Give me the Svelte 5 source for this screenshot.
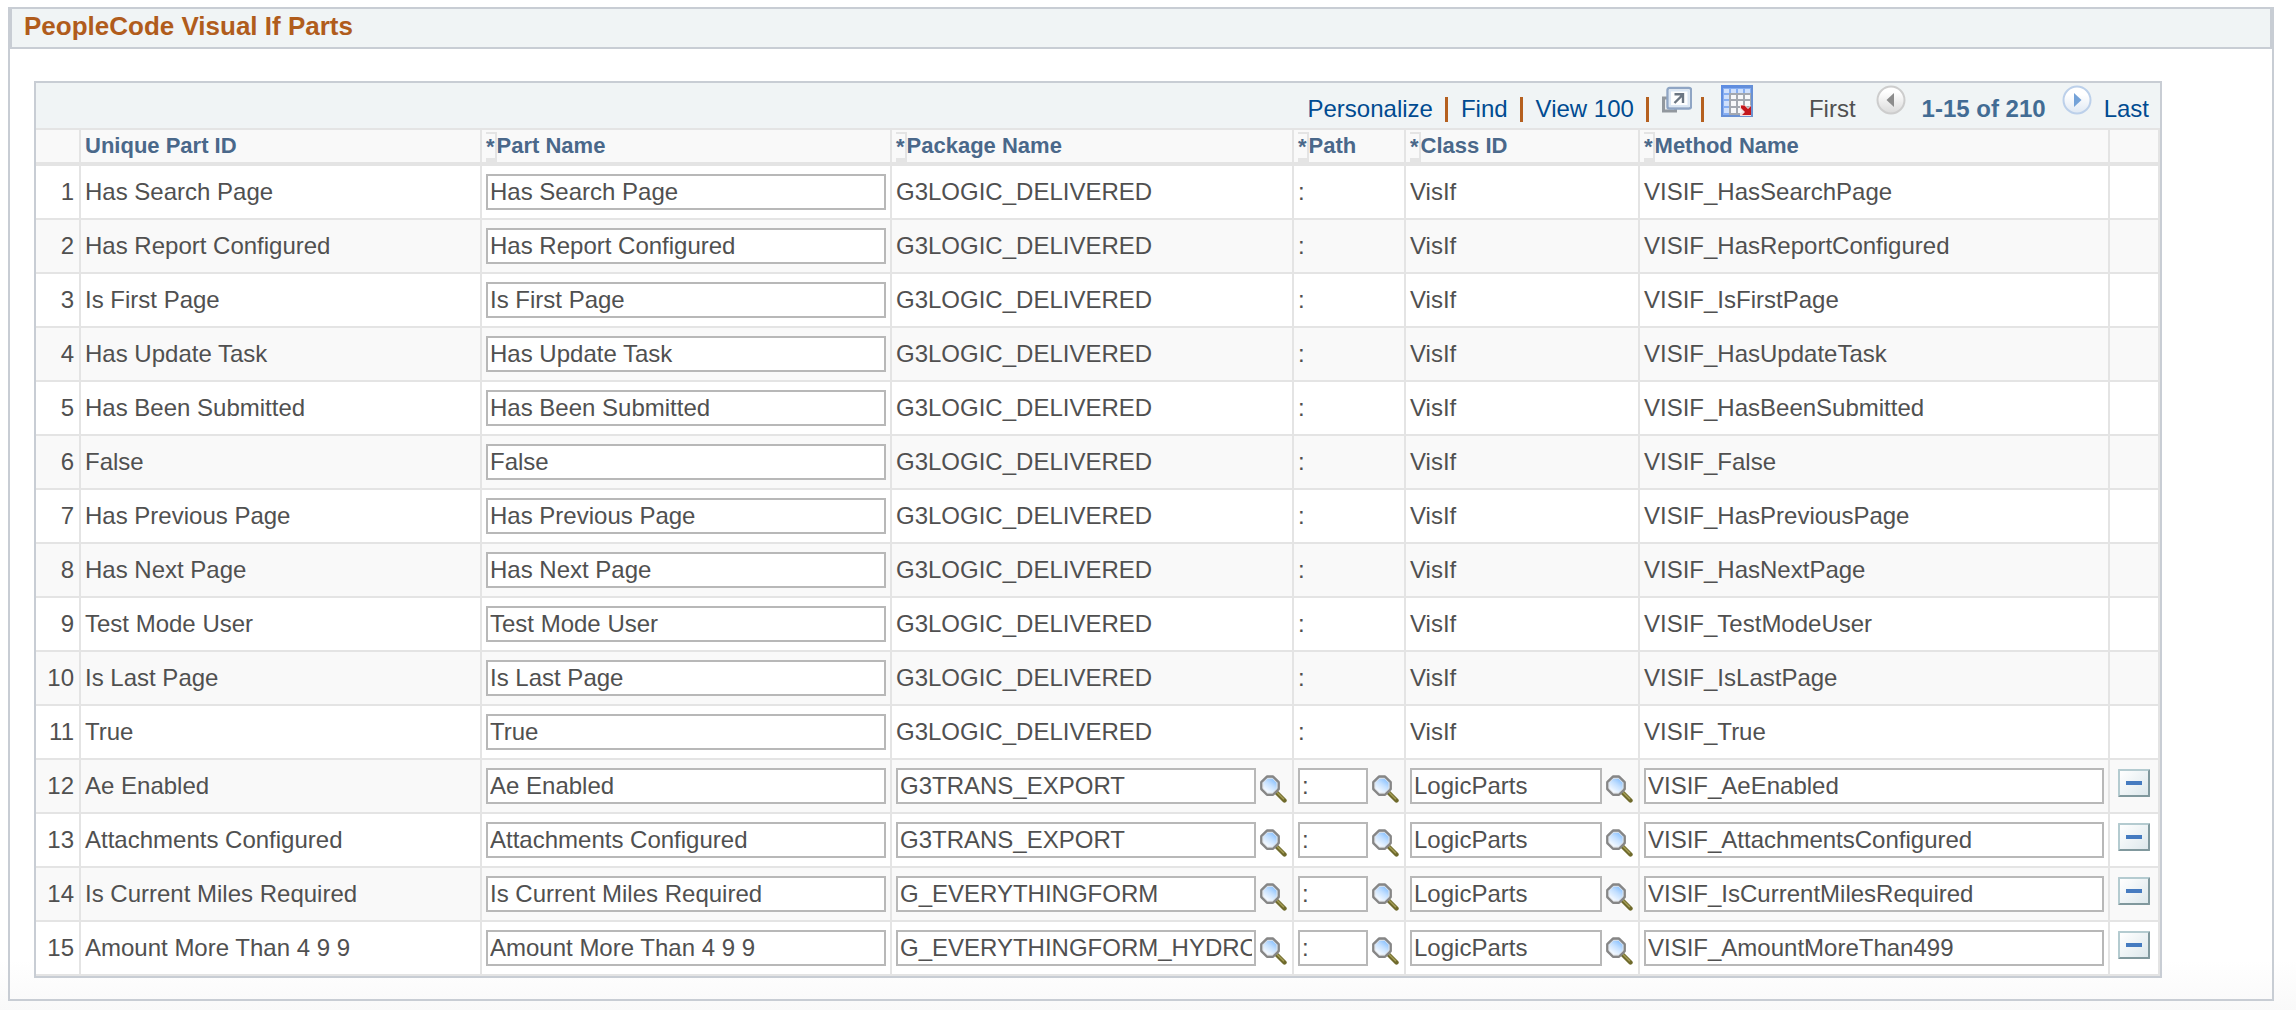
<script lang="ts">
  type Row = { name: string; pkg: string; path: string; cls: string; method: string; editable?: boolean };

  const delivered = (name: string, method: string): Row => ({
    name, pkg: 'G3LOGIC_DELIVERED', path: ':', cls: 'VisIf', method
  });
  const custom = (name: string, pkg: string, method: string): Row => ({
    name, pkg, path: ':', cls: 'LogicParts', method, editable: true
  });

  const rows: Row[] = [
    delivered('Has Search Page', 'VISIF_HasSearchPage'),
    delivered('Has Report Configured', 'VISIF_HasReportConfigured'),
    delivered('Is First Page', 'VISIF_IsFirstPage'),
    delivered('Has Update Task', 'VISIF_HasUpdateTask'),
    delivered('Has Been Submitted', 'VISIF_HasBeenSubmitted'),
    delivered('False', 'VISIF_False'),
    delivered('Has Previous Page', 'VISIF_HasPreviousPage'),
    delivered('Has Next Page', 'VISIF_HasNextPage'),
    delivered('Test Mode User', 'VISIF_TestModeUser'),
    delivered('Is Last Page', 'VISIF_IsLastPage'),
    delivered('True', 'VISIF_True'),
    custom('Ae Enabled', 'G3TRANS_EXPORT', 'VISIF_AeEnabled'),
    custom('Attachments Configured', 'G3TRANS_EXPORT', 'VISIF_AttachmentsConfigured'),
    custom('Is Current Miles Required', 'G_EVERYTHINGFORM', 'VISIF_IsCurrentMilesRequired'),
    custom('Amount More Than 4 9 9', 'G_EVERYTHINGFORM_HYDRO', 'VISIF_AmountMoreThan499')
  ];

  const required = ['Part Name', 'Package Name', 'Path', 'Class ID', 'Method Name'];
</script>

{#snippet lookup(label: string, value: string, row: number)}
  <div class="lookup">
    <input type="text" {value} aria-label="{label}, row {row}" />
    <button class="icon-btn" type="button" aria-label="Look up {label}, row {row}">
      <svg width="28" height="28" viewBox="0 0 28 28">
        <path d="M17.500 17.500L25.500 25.500" stroke="#6f6a2c" stroke-width="4.400" stroke-linecap="round" />
        <path d="M17.500 16.800L25 24.300" stroke="#a39c55" stroke-width="1.500" />
        <path d="M8 1.600h6l5.600 5.600v6.800l-5.600 5.600H8L2.400 14V7.200z" fill="url(#lens)" stroke="#868686" stroke-width="2.600" stroke-linejoin="round" />
        <path d="M8.500 3.300h5l4.500 4.500v5.800l-4.500 4.400h-5L4 13.600V7.800z" fill="none" stroke="#dfe3e8" stroke-width="1" />
      </svg>
    </button>
  </div>
{/snippet}

<svg class="defs" width="0" height="0" aria-hidden="true">
  <defs>
    <linearGradient id="lens" x1="0.8" y1="0.1" x2="0.25" y2="0.9">
      <stop offset="0" stop-color="#7fbcff" />
      <stop offset="0.45" stop-color="#c4e0ff" />
      <stop offset="1" stop-color="#ffffff" />
    </linearGradient>
    <linearGradient id="ball" x1="0" y1="0" x2="0" y2="1">
      <stop offset="0.2" stop-color="#ffffff" />
      <stop offset="1" stop-color="#dadada" />
    </linearGradient>
    <linearGradient id="ball-blue" x1="0" y1="0" x2="0" y2="1">
      <stop offset="0.3" stop-color="#ffffff" />
      <stop offset="1" stop-color="#dfe8f3" />
    </linearGradient>
    <linearGradient id="sheet" x1="0" y1="0" x2="1" y2="1">
      <stop offset="0" stop-color="#5c8ce4" />
      <stop offset="1" stop-color="#6f93cc" />
    </linearGradient>
  </defs>
</svg>

<section class="group">
  <h1>PeopleCode Visual If Parts</h1>

  <div class="grid">
    <div class="toolbar">
      <a href="#personalize">Personalize</a>
      <span class="bar"></span>
      <a href="#find">Find</a>
      <span class="bar"></span>
      <a href="#all">View 100</a>
      <span class="bar"></span>
      <button class="icon-btn" type="button" aria-label="Zoom grid">
        <svg width="30" height="28" viewBox="0 0 30 28">
          <rect x="1.500" y="13" width="12" height="13" fill="#e9ecee" stroke="#92989e" stroke-width="3" />
          <rect x="5.500" y="3" width="23.500" height="20.500" rx="2" fill="#fdfefe" stroke="#8fa5c4" stroke-width="2.400" />
          <rect x="8" y="5.500" width="18.500" height="15.500" fill="none" stroke="#dbe7f4" stroke-width="2" />
          <path d="M12.500 18L20 10.500M12.500 9.200h8.500V18" fill="none" stroke="#6b7682" stroke-width="2.400" />
        </svg>
      </button>
      <span class="bar"></span>
      <button class="icon-btn export" type="button" aria-label="Download to Excel">
        <svg width="32" height="32" viewBox="0 0 32 32">
          <rect width="32" height="32" fill="url(#sheet)" />
          <rect x="2" y="3" width="28" height="27" fill="#a3a8b0" />
          <path d="M2 3h28v5H2zM2 3h6v27H2z" fill="#86aef2" />
          <path d="M3 4h5v4H3zM10 4h5v4h-5zM17 4h5v4h-5zM24 4h5v4h-5zM3 10h5v4H3zM3 16h5v5H3zM3 23h5v5H3z" fill="#cfe0fc" />
          <path d="M10 10h5v4h-5zM17 10h5v4h-5zM24 10h5v4h-5zM10 16h5v5h-5zM17 16h5v5h-5zM24 16h5v5h-5zM10 23h5v5h-5zM17 23h5v5h-5z" fill="#f7f8fa" />
          <path d="M19 20h5l3 3 3-3v11H19v-3l3-1-3-3z" fill="#f4dcdc" />
          <path d="M20 20.500h3.500l3.500 3.500 3-3V30h-9l3-3-4-4z" fill="#c4161c" />
        </svg>
      </button>
      <span class="first">First</span>
      <button class="icon-btn" type="button" disabled aria-label="Previous rows">
        <svg width="30" height="32" viewBox="0 0 30 32">
          <circle cx="15" cy="15" r="13.500" fill="url(#ball)" stroke="#cdcdcd" stroke-width="2" />
          <path d="M18 8v14l-7.500-7z" fill="#8c8c8c" />
        </svg>
      </button>
      <strong>1-15 of 210</strong>
      <button class="icon-btn" type="button" aria-label="Next rows">
        <svg width="30" height="32" viewBox="0 0 30 32">
          <circle cx="15" cy="15" r="13.500" fill="url(#ball-blue)" stroke="#bcd0ea" stroke-width="2" />
          <path d="M12 8v14l7.500-7z" fill="#74a2d8" />
        </svg>
      </button>
      <a class="last" href="#last">Last</a>
    </div>

    <table>
      <colgroup>
        <col class="c-num" /><col class="c-id" /><col class="c-name" /><col class="c-pkg" />
        <col class="c-path" /><col class="c-class" /><col class="c-method" /><col class="c-del" />
      </colgroup>
      <thead>
        <tr>
          <td></td>
          <th>Unique Part ID</th>
          {#each required as label}
            <th><div class="req"><span class="star">*</span>{label}</div></th>
          {/each}
          <td></td>
        </tr>
      </thead>
      <tbody>
        {#each rows as r, i (r.name)}
          <tr>
            <td class="num">{i + 1}</td>
            <td>{r.name}</td>
            <td><input type="text" value={r.name} aria-label="Part Name, row {i + 1}" /></td>
            {#if r.editable}
              <td>{@render lookup('Package Name', r.pkg, i + 1)}</td>
              <td>{@render lookup('Path', r.path, i + 1)}</td>
              <td>{@render lookup('Class ID', r.cls, i + 1)}</td>
              <td><input type="text" value={r.method} aria-label="Method Name, row {i + 1}" /></td>
              <td class="del">
                <button class="minus" type="button" aria-label="Delete row {i + 1}"></button>
              </td>
            {:else}
              <td>{r.pkg}</td>
              <td>{r.path}</td>
              <td>{r.cls}</td>
              <td>{r.method}</td>
              <td></td>
            {/if}
          </tr>
        {/each}
      </tbody>
    </table>
  </div>
</section>

<style>
  :global(html) { min-height: 100%; background: linear-gradient(to bottom, #fff calc(100% - 50px), #f9f9f9); }
  .defs { position: absolute; }
  .group { margin: 7px 22px 0 8px; border: 2px solid #c8cdd4; padding-bottom: 21px; font-family: Arial, "Liberation Sans", sans-serif; font-size: 24px; color: #505050; }
  h1 { margin: 0 0 34px; padding: 0 12px; height: 38px; box-sizing: border-box; border: 0 solid #c8cdd4; border-width: 0 2px; box-shadow: 0 2px #c8cdd4; background: #f0f4f5; color: #b05c1c; font-size: 26px; line-height: 34px; }
  .grid { margin: 0 110px 0 24px; border: 2px solid #c8cdd4; background: #fff; }

  .toolbar { display: flex; justify-content: flex-end; height: 45px; padding-right: 8px; background: #f0f4f5; line-height: 52px; white-space: nowrap; }
  .toolbar a { margin-right: 3px; color: #004b91; text-decoration: none; }
  .toolbar .icon-btn { margin-top: 2px; }
  .toolbar .export { margin-left: 4px; }
  .toolbar .last { margin-left: 12px; }
  .toolbar strong { margin: 0 16px; color: #426c94; }
  .bar { width: 3px; height: 25px; margin: 14px 13px 0 9px; background: #b5601f; }
  .first { margin: 0 20px 0 56px; }
  .icon-btn { align-self: flex-start; padding: 0; border: none; background: none; line-height: 0; cursor: pointer; }

  table { width: 100%; table-layout: fixed; border-collapse: separate; border-spacing: 0; border-top: 2px solid #e4e4e4; }
  .c-num { width: 45px; }
  .c-id { width: 401px; }
  .c-name { width: 410px; }
  .c-pkg { width: 402px; }
  .c-path { width: 112px; }
  .c-class { width: 234px; }
  .c-method { width: 470px; }
  .c-del { width: 50px; }
  th, td { box-sizing: border-box; padding: 0 4px; border: 0 solid #e4e4e4; border-width: 0 2px 2px 0; text-align: left; vertical-align: middle; white-space: nowrap; }
  thead th, thead td { height: 36px; border-bottom-width: 4px; background: #f9f9f9; color: #4a688a; font-size: 22px; line-height: 32px; }
  tbody td { height: 54px; }
  tbody tr:nth-child(even) { background: #f9f9f9; }
  .req { display: flex; height: 32px; }
  .star { box-sizing: border-box; height: 30px; margin-top: 2px; border: 0 solid #e4e4e4; border-width: 2px 2px 4px 0; line-height: 26px; }
  .num { padding-right: 5px; text-align: right; }

  input { display: block; box-sizing: border-box; width: 100%; height: 36px; padding: 0 2px; border: 2px solid #b8b8b8; border-radius: 0; background: #fff; font: inherit; color: inherit; }
  .lookup { display: flex; gap: 3px; padding-right: 1px; }
  .lookup input { flex: 1; min-width: 0; }
  .lookup .icon-btn { margin-top: 7px; }
  .del { padding: 9px 0 0 8px; vertical-align: top; }
  .minus { display: flex; align-items: center; justify-content: center; width: 32px; height: 28px; padding: 0; border: 2px solid; border-color: #b4cbd0 #80989d #80989d #b4cbd0; border-radius: 1px; background: linear-gradient(135deg, #fff, #dde8ec); cursor: pointer; }
  .minus::before { content: ""; width: 16px; height: 4px; background: #457bc0; }
</style>
